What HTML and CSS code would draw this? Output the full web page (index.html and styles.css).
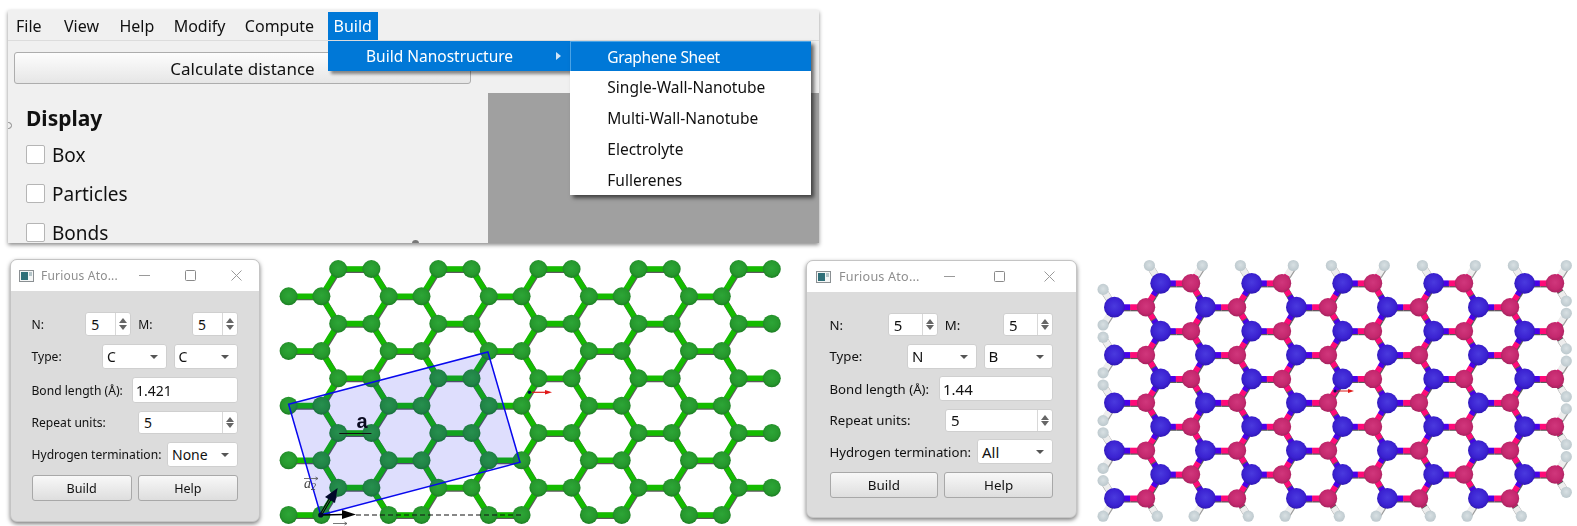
FILE: index.html
```html
<!DOCTYPE html>
<html lang="en">
<head>
    <meta charset="UTF-8">
    <title>Furious Atoms: Build Nanostructure</title>
    <link rel="stylesheet" href="styles.css">
</head>
<body>
    <div class="app">
        <div class="menubar">
            <span class="menu-item">File</span>
            <span class="menu-item">View</span>
            <span class="menu-item">Help</span>
            <span class="menu-item">Modify</span>
            <span class="menu-item">Compute</span>
            <span class="menu-item menu-open">Build</span>
        </div>
        <div class="app-body">
            <button class="calc-btn">Calculate distance</button>
            <div class="side">
                <h3>Display</h3>
                <label class="check"><span class="box"></span>Box</label>
                <label class="check"><span class="box"></span>Particles</label>
                <label class="check"><span class="box"></span>Bonds</label>
            </div>
            <div class="viewer"></div>
        </div>
        <span class="handle handle-left"></span>
        <span class="handle handle-bottom"></span>
        <div class="dropdown">
            <div class="drop-item">Build Nanostructure<span class="sub-arrow"></span></div>
        </div>
        <div class="submenu">
            <div class="sub-item selected">Graphene Sheet</div>
            <div class="sub-item">Single-Wall-Nanotube</div>
            <div class="sub-item">Multi-Wall-Nanotube</div>
            <div class="sub-item">Electrolyte</div>
            <div class="sub-item">Fullerenes</div>
        </div>
    </div>

    <div class="bottom">
        <div class="win win-a">
            <div class="titlebar">
                <svg class="app-icon" viewBox="0 0 15 12"><rect x="0.5" y="0.5" width="14" height="11" fill="#f4f6f6" stroke="#8a8f92"/><rect x="2" y="2" width="7" height="8" fill="#2f6f78"/><rect x="10" y="2" width="3" height="4" fill="#b4c4c8"/></svg>
                <span class="title">Furious Ato...</span>
                <svg class="ctl" viewBox="0 0 11 11"><path d="M0 5.5H11" stroke="#9a9a9a"/></svg>
                <svg class="ctl" viewBox="0 0 11 11"><rect x="0.5" y="0.5" width="10" height="10" rx="1" fill="none" stroke="#8a8a8a"/></svg>
                <svg class="ctl" viewBox="0 0 11 11"><path d="M0.5 0.5L10.5 10.5M10.5 0.5L0.5 10.5" stroke="#9a9a9a"/></svg>
            </div>
            <div class="form">
                <div class="row">
                    <span class="lbl">N:</span>
                    <div class="spin small"><span>5</span><i class="steps"></i></div>
                    <span class="lbl lbl-m">M:</span>
                    <div class="spin small"><span>5</span><i class="steps"></i></div>
                </div>
                <div class="row">
                    <span class="lbl">Type:</span>
                    <div class="combo type">C</div>
                    <div class="combo type next">C</div>
                </div>
                <div class="row">
                    <span class="lbl">Bond length (Å):</span>
                    <div class="field">1.421</div>
                </div>
                <div class="row">
                    <span class="lbl">Repeat units:</span>
                    <div class="spin long"><span>5</span><i class="steps"></i></div>
                </div>
                <div class="row">
                    <span class="lbl">Hydrogen termination:</span>
                    <div class="combo hydrogen">None</div>
                </div>
                <div class="row buttons">
                    <button class="btn">Build</button>
                    <button class="btn">Help</button>
                </div>
            </div>
        </div>

        <svg class="sheet sheet-c" id="graphene" viewBox="0 0 530 276">
            <defs>
                <radialGradient id="atom-c" cx="50%" cy="45%" r="55%">
                    <stop offset="0%" stop-color="#2da637"/>
                    <stop offset="70%" stop-color="#26982d"/>
                    <stop offset="100%" stop-color="#1d7d24"/>
                </radialGradient>
            </defs>
            <g id="graphene-atoms"></g>
            <polygon points="18.6,154.3 217.9,102 250,212.3 50.7,265" fill="rgba(0,0,240,0.13)" stroke="#0808ee" stroke-width="1.5"/>
            <path d="M69.3 183.5H101.4" stroke="#111" stroke-width="1.2"/>
            <text class="lattice-a" x="92" y="178" text-anchor="middle">a</text>
            <path d="M86 265H252" stroke="#111" stroke-width="1.2" stroke-dasharray="5 3"/>
            <path d="M50.7 265L74 264.5" stroke="#000" stroke-width="1.6"/>
            <path d="M72 260L86 264.5L72 269Z" fill="#000"/>
            <path d="M50.7 265L62 246" stroke="#000" stroke-width="2.8"/>
            <path d="M50.7 265L62 246" stroke="#2c8c3a" stroke-width="0.9"/>
            <path d="M67.6 238L65 253L55 247Z" fill="#00082a"/>
            <circle cx="50.7" cy="265" r="2.6" fill="#00082a"/>
            <text class="vec" x="34" y="238">a<tspan class="vec-sub" dy="2">2</tspan></text>
            <path d="M34 228.5H48M45.5 227L48 228.5L45.5 230" class="vec-line"/>
            <text class="vec" x="63" y="285">a</text>
            <path d="M63 273.5H77M74.5 272L77 273.5L74.5 275" class="vec-line"/>
            <circle cx="259.5" cy="142.3" r="1.8" fill="#001050"/>
            <path d="M262 142.3H276" stroke="#e01818" stroke-width="1.2"/>
            <path d="M275 140L282 142.3L275 144.6Z" fill="#e01818"/>
        </svg>

        <div class="win win-b">
            <div class="titlebar">
                <svg class="app-icon" viewBox="0 0 15 12"><rect x="0.5" y="0.5" width="14" height="11" fill="#f4f6f6" stroke="#8a8f92"/><rect x="2" y="2" width="7" height="8" fill="#2f6f78"/><rect x="10" y="2" width="3" height="4" fill="#b4c4c8"/></svg>
                <span class="title">Furious Ato...</span>
                <svg class="ctl" viewBox="0 0 11 11"><path d="M0 5.5H11" stroke="#9a9a9a"/></svg>
                <svg class="ctl" viewBox="0 0 11 11"><rect x="0.5" y="0.5" width="10" height="10" rx="1" fill="none" stroke="#8a8a8a"/></svg>
                <svg class="ctl" viewBox="0 0 11 11"><path d="M0.5 0.5L10.5 10.5M10.5 0.5L0.5 10.5" stroke="#9a9a9a"/></svg>
            </div>
            <div class="form">
                <div class="row">
                    <span class="lbl">N:</span>
                    <div class="spin small"><span>5</span><i class="steps"></i></div>
                    <span class="lbl lbl-m">M:</span>
                    <div class="spin small"><span>5</span><i class="steps"></i></div>
                </div>
                <div class="row">
                    <span class="lbl">Type:</span>
                    <div class="combo type">N</div>
                    <div class="combo type next">B</div>
                </div>
                <div class="row">
                    <span class="lbl">Bond length (Å):</span>
                    <div class="field">1.44</div>
                </div>
                <div class="row">
                    <span class="lbl">Repeat units:</span>
                    <div class="spin long"><span>5</span><i class="steps"></i></div>
                </div>
                <div class="row">
                    <span class="lbl">Hydrogen termination:</span>
                    <div class="combo hydrogen">All</div>
                </div>
                <div class="row buttons">
                    <button class="btn">Build</button>
                    <button class="btn">Help</button>
                </div>
            </div>
        </div>

        <svg class="sheet sheet-bn" id="boron-nitride" viewBox="0 0 487 276">
            <defs>
                <radialGradient id="atom-n" cx="50%" cy="45%" r="55%">
                    <stop offset="0%" stop-color="#4a3ade"/>
                    <stop offset="70%" stop-color="#3b22d2"/>
                    <stop offset="100%" stop-color="#2f18b4"/>
                </radialGradient>
                <radialGradient id="atom-b" cx="50%" cy="45%" r="55%">
                    <stop offset="0%" stop-color="#d0377c"/>
                    <stop offset="70%" stop-color="#c4286e"/>
                    <stop offset="100%" stop-color="#a5235e"/>
                </radialGradient>
                <radialGradient id="atom-h" cx="50%" cy="45%" r="55%">
                    <stop offset="0%" stop-color="#d8e0e3"/>
                    <stop offset="100%" stop-color="#bcc8cd"/>
                </radialGradient>
            </defs>
            <g id="bn-atoms"></g>
            <circle cx="245" cy="141" r="1.6" fill="#001050"/>
            <path d="M247 141H259" stroke="#e01818" stroke-width="1"/>
            <path d="M258 139L264 141L258 143Z" fill="#e01818"/>
        </svg>
    </div>
    <script src="lattice.js"></script>
</body>
</html>
```

FILE: styles.css
```css
body {
    margin: 0;
    background: #fff;
    font-family: "Noto Sans", "Open Sans", sans-serif;
    color: #111;
    overflow: hidden;
}

/* main application window */
.app {
    position: relative;
    margin: 10px 0 0 8px;
    width: 811px;
    height: 233px;
    background: #f0f0f0;
    box-shadow: 0 2px 4px rgba(0,0,0,0.45);
    overflow: hidden;
    filter: blur(0.3px);
}
.menubar {
    display: flex;
    height: 30px;
    align-items: flex-end;
    border-bottom: 1px solid #dcdcdc;
    padding-left: 2px;
    font-size: 16px;
}
.menu-item {
    height: 28px;
    line-height: 28px;
    padding: 0 6px;
    margin-right: 7.4px;
}
.menu-item:first-child {
    margin-right: 10.4px;
}
.menu-item:nth-child(2) {
    margin-right: 8.4px;
}
.menu-open {
    background: #0078d7;
    color: #fff;
    margin-right: 0;
}
.app-body {
    display: grid;
    grid-template-columns: 480px 1fr;
    grid-template-rows: 52px 150px;
}
.calc-btn {
    grid-column: 1 / 3;
    width: 457px;
    height: 32px;
    margin: 11px 0 0 6px;
    padding: 0;
    font: 17px "Noto Sans", sans-serif;
    color: #111;
    background: linear-gradient(#fdfdfd, #e6e6e6);
    border: 1px solid #adadad;
    border-radius: 3px;
}
.side {
    padding: 10px 0 0 18px;
}
.side h3 {
    margin: 0 0 2px;
    font-size: 21px;
    line-height: 30px;
}
.check {
    display: flex;
    align-items: center;
    height: 39px;
    font-size: 19px;
}
.box {
    width: 17px;
    height: 17px;
    margin-right: 7px;
    background: #fff;
    border: 1px solid #b5b5b5;
    border-radius: 2px;
}
.viewer {
    background: #a0a0a0;
}
.handle {
    position: absolute;
    border-radius: 50%;
}
.handle-left {
    left: -3px;
    top: 112px;
    width: 5px;
    height: 5px;
    border: 1px solid #888;
}
.handle-bottom {
    left: 404px;
    top: 230px;
    width: 7px;
    height: 7px;
    background: #777;
}
.dropdown {
    position: absolute;
    left: 320px;
    top: 31px;
    width: 243px;
    height: 30px;
    background: #0078d7;
    color: #fff;
    box-shadow: 3px 3px 3px rgba(0,0,0,0.45);
    font-size: 15.5px;
}
.drop-item {
    position: relative;
    line-height: 31px;
    padding-left: 38px;
}
.sub-arrow {
    position: absolute;
    left: 228px;
    top: 11px;
    border-left: 5px solid #cfe4f6;
    border-top: 4px solid transparent;
    border-bottom: 4px solid transparent;
}
.submenu {
    position: absolute;
    left: 562.3px;
    top: 31px;
    width: 241px;
    height: 154px;
    background: #fff;
    box-shadow: 3px 3px 4px rgba(0,0,0,0.6);
    font-size: 15.5px;
}
.sub-item {
    height: 31px;
    line-height: 30px;
    padding-left: 37px;
}
.sub-item.selected {
    height: 30px;
    background: #0078d7;
    color: #fff;
    border: 1px solid #4aa3e6;
    border-bottom: 0;
    border-right: 0;
    padding-left: 36px;
    box-sizing: border-box;
    margin-bottom: 1px;
    letter-spacing: -0.35px;
}

/* bottom strip: two dialogs and two lattices */
.bottom {
    display: flex;
    align-items: flex-start;
    height: 276px;
    margin-top: 7px;
    padding-left: 10px;
}
.win {
    box-sizing: border-box;
    flex: none;
    background: #dcdcdc;
    border: 1px solid #c4c4c4;
    border-radius: 7px;
    box-shadow: 0 2px 4px rgba(0,0,0,0.5);
    overflow: hidden;
    filter: blur(0.3px);
}
.win-a {
    --lbl: 12.1px;
    --val: 14px;
    --spin-w: 46px;
    --type-w: 64.5px;
    --field-w: 106px;
    --long-w: 100px;
    --hyd-w: 71px;
    --spin-h: 24px;
    --field-h: 26px;
    --gap: 8px;
    width: 250px;
    height: 263px;
    margin-top: 9px;
}
.win-b {
    --lbl: 13.2px;
    --val: 15px;
    --spin-w: 50px;
    --type-w: 69.5px;
    --field-w: 114px;
    --long-w: 108px;
    --hyd-w: 76px;
    --spin-h: 23px;
    --field-h: 25px;
    --gap: 7.6px;
    width: 271px;
    height: 258px;
    margin: 10px 0 0 6px;
}
.titlebar {
    display: flex;
    align-items: center;
    height: 31px;
    padding-left: 8px;
    background: #fff;
}
.app-icon {
    flex: none;
    width: 15px;
    height: 12px;
    margin-right: 7px;
}
.title {
    flex: none;
    width: 98px;
    color: #8e8e8e;
    font-size: 12px;
    letter-spacing: 0.2px;
}
.ctl {
    flex: none;
    width: 11px;
    height: 11px;
    margin-right: 35px;
}
.ctl:last-child {
    margin-right: 0;
}
.win-b .app-icon {
    width: 17px;
}
.win-b .title {
    width: 105px;
    font-size: 12.6px;
}
.win-b .ctl {
    margin-right: 39px;
}
.win-b .ctl:last-child {
    margin-right: 0;
}
.form {
    display: flex;
    flex-direction: column;
    gap: var(--gap);
    padding: 21px 21px 0 20.5px;
    font-size: var(--lbl);
}
.win-b .form {
    padding: 21px 23px 0 22.5px;
}
.row {
    display: flex;
    align-items: center;
}
.lbl {
    flex: 1;
    white-space: nowrap;
}
.lbl-m {
    margin-left: 7px;
}
.spin, .combo, .field {
    box-sizing: border-box;
    position: relative;
    background: #fff;
    border: 1px solid #cfcfcf;
    border-radius: 3px;
    font-size: var(--val);
    padding-left: 4px;
    display: flex;
    align-items: center;
}
.spin {
    height: var(--spin-h);
    padding-left: 5px;
}
.spin.small {
    width: var(--spin-w);
}
.spin.long {
    width: var(--long-w);
    height: 23px;
}
.steps {
    position: absolute;
    right: 0;
    top: 0;
    bottom: 0;
    width: 14px;
    border-left: 1px solid #d8d8d8;
}
.steps::before, .steps::after {
    content: "";
    position: absolute;
    left: 3px;
    border-left: 4px solid transparent;
    border-right: 4px solid transparent;
}
.steps::before {
    top: 5px;
    border-bottom: 5px solid #666;
}
.steps::after {
    bottom: 5px;
    border-top: 5px solid #666;
}
.combo {
    height: 25px;
}
.combo::after {
    content: "";
    position: absolute;
    right: 8px;
    top: 10px;
    border-left: 4px solid transparent;
    border-right: 4px solid transparent;
    border-top: 4px solid #555;
}
.combo.type {
    width: var(--type-w);
}
.combo.next {
    margin-left: 7px;
}
.combo.hydrogen {
    width: var(--hyd-w);
}
.field {
    width: var(--field-w);
    height: var(--field-h);
    padding-left: 3px;
}
.buttons {
    gap: 6px;
}
.btn {
    flex: 1;
    height: 26px;
    padding: 0;
    font: 12.6px "Noto Sans", sans-serif;
    color: #111;
    background: linear-gradient(#f8f8f8, #dedede);
    border: 1px solid #a8a8a8;
    border-radius: 3px;
}
.win-b .btn {
    font-size: 13.4px;
}
.sheet {
    flex: none;
    height: 276px;
    filter: blur(0.5px);
}
.sheet-c {
    width: 530px;
    margin-left: 10px;
}
.sheet-bn {
    width: 487px;
    margin-left: 13px;
}
.lattice-a {
    font: bold 20px "Liberation Sans", sans-serif;
    fill: #0a0a20;
}
.vec {
    font: italic 14px "Liberation Serif", serif;
    fill: #444;
}
.vec-sub {
    font-size: 10px;
}
.vec-line {
    fill: none;
    stroke: #555;
    stroke-width: 0.8;
}
```

FILE: lattice.js
```js
// draws the two honeycomb sheets, there are too many atoms to write by hand
const SVG_NS = 'http://www.w3.org/2000/svg';

function add(parent, tag, attrs) {
    const el = document.createElementNS(SVG_NS, tag);
    for (const key in attrs) {
        el.setAttribute(key, attrs[key]);
    }
    parent.appendChild(el);
    return el;
}

function drawBond(group, a, b, width, color, shade) {
    add(group, 'line', { x1: a.x + 0.5, y1: a.y + 0.9, x2: b.x + 0.5, y2: b.y + 0.9, stroke: shade || '#5a5a5a', 'stroke-width': width });
    add(group, 'line', { x1: a.x, y1: a.y, x2: b.x, y2: b.y, stroke: color, 'stroke-width': width - 0.6 });
}

// even rows hold columns 2,3 6,7 ... and odd rows hold 0,1 4,5 ...
function buildLattice(opts) {
    const atoms = {};
    for (let r = 0; r < 10; r++) {
        for (let c = 0; c < 20; c++) {
            if ((c % 4 < 2) === (r % 2 === 1)) {
                const k = Math.floor(c / 4);
                atoms[r + ':' + c] = { r: r, c: c, x: opts.cols[c % 4] + opts.pitch * k, y: opts.top + opts.rowGap * r };
            }
        }
    }
    return atoms;
}

function neighbours(atoms, atom) {
    const side = atom.c % 2 === 0 ? -1 : 1;
    const list = [];
    if (atom.c % 2 === 0) {
        list.push({ dr: 0, dc: 1 });
    }
    list.push({ dr: -1, dc: side }, { dr: 1, dc: side });
    return list.map(n => ({ dr: n.dr, dc: n.dc, atom: atoms[(atom.r + n.dr) + ':' + (atom.c + n.dc)] }));
}

function drawGraphene() {
    const group = document.getElementById('graphene-atoms');
    const atoms = buildLattice({ cols: [18.6, 51.4, 68.2, 101.4], pitch: 100.1, top: 19, rowGap: 27.33 });
    Object.values(atoms).forEach(atom => {
        neighbours(atoms, atom).forEach(n => {
            if (n.atom && (n.dr === 0 || atom.c % 2 === 1)) {
                drawBond(group, atom, n.atom, 6.2, '#14bb00');
            }
        });
    });
    Object.values(atoms).forEach(atom => {
        add(group, 'circle', { cx: atom.x, cy: atom.y, r: 9, fill: 'url(#atom-c)' });
    });
}

function drawBoronNitride() {
    const group = document.getElementById('bn-atoms');
    const atoms = buildLattice({ cols: [24.4, 56, 70.7, 101], pitch: 91, top: 33.3, rowGap: 23.9 });
    const hydrogens = [];
    Object.values(atoms).forEach(atom => {
        const isN = atom.c % 2 === 0;
        neighbours(atoms, atom).forEach(n => {
            if (n.atom) {
                if (n.dr === 0 || !isN) {
                    const mid = { x: (atom.x + n.atom.x) / 2, y: (atom.y + n.atom.y) / 2 };
                    const nAtom = isN ? atom : n.atom;
                    const bAtom = isN ? n.atom : atom;
                    drawBond(group, nAtom, mid, 6.4, '#4a00ea');
                    drawBond(group, mid, bAtom, 6.4, '#ff0a78');
                }
            } else if (n.dr !== 0) {
                const h = { x: atom.x + (isN ? -11.3 : 11.3), y: atom.y + n.dr * 17.8 };
                const mid = { x: atom.x + (h.x - atom.x) * 0.45, y: atom.y + (h.y - atom.y) * 0.45 };
                drawBond(group, mid, h, 7, '#ededed', '#9a9a9a');
                drawBond(group, atom, mid, 6.4, isN ? '#4a00ea' : '#ff0a78');
                hydrogens.push(h);
            }
        });
    });
    hydrogens.forEach(h => {
        add(group, 'circle', { cx: h.x, cy: h.y, r: 5.6, fill: 'url(#atom-h)' });
    });
    Object.values(atoms).forEach(atom => {
        const isN = atom.c % 2 === 0;
        add(group, 'circle', { cx: atom.x, cy: atom.y, r: isN ? 10.4 : 9.2, fill: isN ? 'url(#atom-n)' : 'url(#atom-b)' });
    });
}

window.addEventListener('load', function() {
    drawGraphene();
    drawBoronNitride();
});
```
